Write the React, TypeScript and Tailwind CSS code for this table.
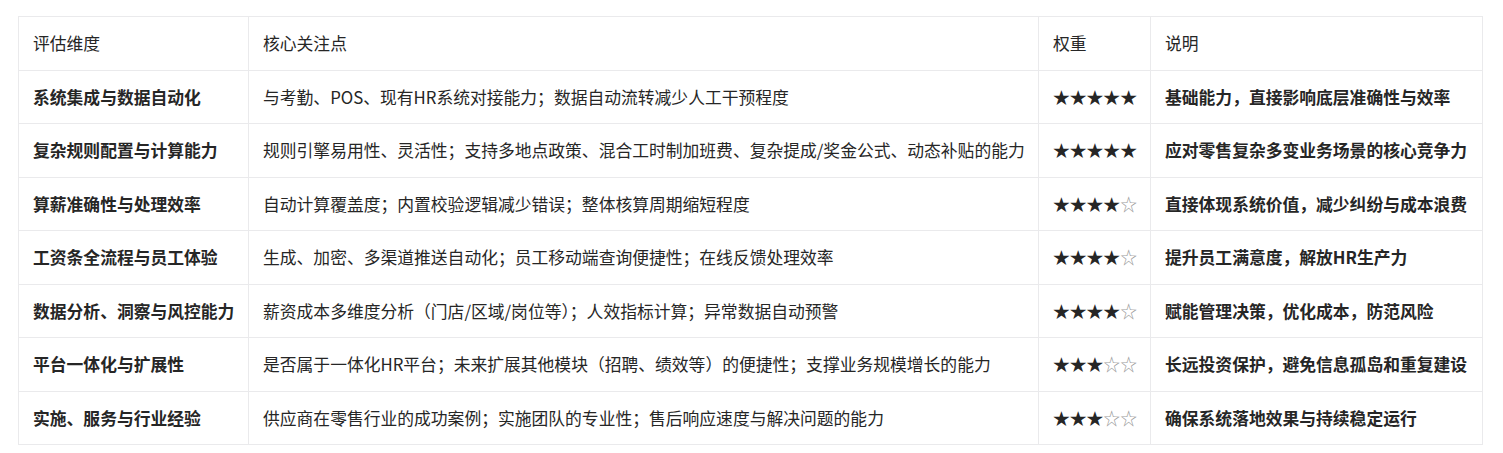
import React from "react";

const rows = [
  ["系统集成与数据自动化", "与考勤、POS、现有HR系统对接能力；数据自动流转减少人工干预程度", "★★★★★", "基础能力，直接影响底层准确性与效率"],
  ["复杂规则配置与计算能力", "规则引擎易用性、灵活性；支持多地点政策、混合工时制加班费、复杂提成/奖金公式、动态补贴的能力", "★★★★★", "应对零售复杂多变业务场景的核心竞争力"],
  ["算薪准确性与处理效率", "自动计算覆盖度；内置校验逻辑减少错误；整体核算周期缩短程度", "★★★★☆", "直接体现系统价值，减少纠纷与成本浪费"],
  ["工资条全流程与员工体验", "生成、加密、多渠道推送自动化；员工移动端查询便捷性；在线反馈处理效率", "★★★★☆", "提升员工满意度，解放HR生产力"],
  ["数据分析、洞察与风控能力", "薪资成本多维度分析（门店/区域/岗位等）；人效指标计算；异常数据自动预警", "★★★★☆", "赋能管理决策，优化成本，防范风险"],
  ["平台一体化与扩展性", "是否属于一体化HR平台；未来扩展其他模块（招聘、绩效等）的便捷性；支撑业务规模增长的能力", "★★★☆☆", "长远投资保护，避免信息孤岛和重复建设"],
  ["实施、服务与行业经验", "供应商在零售行业的成功案例；实施团队的专业性；售后响应速度与解决问题的能力", "★★★☆☆", "确保系统落地效果与持续稳定运行"],
];

const cell = "border border-[#eaeaec] px-[14px] py-[14px] leading-[24.5px] text-left align-middle";

export default function App() {
  return (
    <div
      className="w-[1503px] h-[453px] bg-white pl-[18px] pt-[16px] text-[#262626] text-[16.8px]"
      style={{ fontFamily: '"Noto Sans CJK SC", "Noto Sans", sans-serif' }}
    >
      <table className="table-fixed border-collapse w-[1464px]">
        <colgroup>
          <col className="w-[230px]" />
          <col className="w-[790px]" />
          <col className="w-[112px]" />
          <col className="w-[332px]" />
        </colgroup>
        <thead>
          <tr>
            <th className={cell + " font-normal"}>评估维度</th>
            <th className={cell + " font-normal"}>核心关注点</th>
            <th className={cell + " font-normal"}>权重</th>
            <th className={cell + " font-normal"}>说明</th>
          </tr>
        </thead>
        <tbody>
          {rows.map((r, i) => {
            const filled = r[2].replace(/☆/g, "");
            const empty = r[2].replace(/★/g, "");
            return (
              <tr key={i}>
                <td className={cell + " font-bold whitespace-nowrap"}>{r[0]}</td>
                <td className={cell + " whitespace-nowrap"}>{r[1]}</td>
                <td className={cell + " whitespace-nowrap"}>
                  <span>{filled}</span>
                  <span className="text-[#9a9a9a]">{empty}</span>
                </td>
                <td className={cell + " font-bold whitespace-nowrap"}>{r[3]}</td>
              </tr>
            );
          })}
        </tbody>
      </table>
    </div>
  );
}
